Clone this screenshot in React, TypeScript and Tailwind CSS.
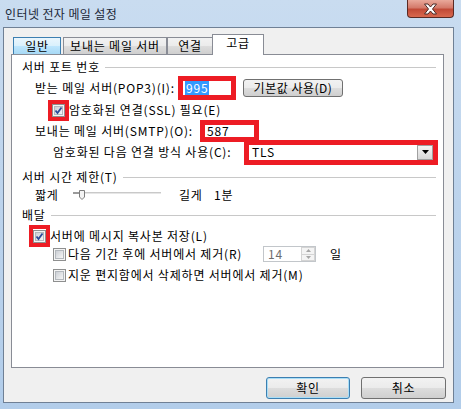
import type { ReactNode } from "react";

// Win7 style button face
const btnFace =
  "bg-[linear-gradient(to_bottom,#f2f2f2_0%,#ebebeb_50%,#dddddd_50%,#cfcfcf_100%)]";

function Mark({ className, children }: { className: string; children?: ReactNode }) {
  return (
    <div className={"flex shrink-0 border-[#ed1c24] bg-white " + className}>
      {children}
    </div>
  );
}

function Check({ checked = false }: { checked?: boolean }) {
  return (
    <span className="flex h-[13px] w-[13px] shrink-0 items-center justify-center border border-[#8e8f8f] bg-[#f4f4f4]">
      <span className="relative flex h-[9px] w-[9px] items-center justify-center border border-[#b3b8bd] bg-[linear-gradient(135deg,#cbcfd5,#f6f6f6)]">
        {checked && (
          <svg width="9" height="9" viewBox="0 0 9 9" className="absolute -left-px -top-px">
            <path d="M1.5 4.5 L3.5 7 L7.5 1.5" fill="none" stroke="#2a4a9a" strokeWidth="1.8" />
          </svg>
        )}
      </span>
    </span>
  );
}

function Group({ title, className = "" }: { title: string; className?: string }) {
  return (
    <div className={"flex h-[20px] shrink-0 items-center pl-[10px] pr-[7px] " + className}>
      <span>{title}</span>
      <div className="ml-[5px] h-px flex-1 bg-[#c8c8c8]" />
    </div>
  );
}

function Tab({ label, w, state }: { label: string; w: string; state: "normal" | "hover" | "active" }) {
  if (state === "active") {
    return (
      <div
        className={`relative z-10 -mb-px -ml-px flex h-[21px] items-center justify-center border border-b-0 border-[#898c95] bg-white pb-[5px] ${w}`}
      >
        {label}
      </div>
    );
  }
  const face =
    state === "hover"
      ? "border-[#3c7fb1] bg-[linear-gradient(to_bottom,#eaf6fd_0%,#d9f0fc_50%,#bee6fd_50%,#a7d9f5_100%)]"
      : "border-[#898c95] " + btnFace;
  return (
    <div className={`flex h-[17px] items-center justify-center border border-b-0 ${face} ${w}`}>
      {label}
    </div>
  );
}

export default function App() {
  return (
    <div className="flex h-[409px] w-[461px] flex-col overflow-hidden bg-[linear-gradient(to_bottom,#c9dcf0_0%,#bcd3ec_50%,#b2cdea_100%)] pl-[3px] pr-[7px] font-['Noto_Sans_CJK_KR',sans-serif] text-[12px] leading-none text-black">
      {/* Title bar */}
      <div className="flex h-[27px] shrink-0 items-start justify-between">
        <span className="mt-[8px] pl-[2px] tracking-[0.4px] text-[#1b2737]">인터넷 전자 메일 설정</span>
        <div className="flex h-[18px] w-[47px] items-center justify-center rounded-b-[4px] border border-t-0 border-[#5a2a24] bg-[linear-gradient(to_bottom,#e9a99b_0%,#d47a6a_45%,#c14a37_55%,#d9694f_100%)]">
          <svg width="15" height="12" viewBox="0 0 15 12">
            <path
              d="M1.5 1 H5 L7.5 4 L10 1 H13.5 L9.5 6 L13.5 11 H10 L7.5 8 L5 11 H1.5 L5.5 6 Z"
              fill="#ffffff"
              stroke="#4b2a26"
              strokeWidth="1"
              strokeLinejoin="round"
            />
          </svg>
        </div>
      </div>

      {/* Client area */}
      <div className="flex h-[376px] w-[451px] shrink-0 flex-col border border-[#6f8095] bg-[#f0f0f0] tracking-[0.8px]">
        {/* Tabs */}
        <div className="flex h-[26px] shrink-0 items-end pl-[9px]">
          <Tab label="일반" w="w-[48px]" state="hover" />
          <div className="w-px" />
          <Tab label="보내는 메일 서버" w="w-[104px] ml-px" state="normal" />
          <Tab label="연결" w="w-[46px]" state="normal" />
          <Tab label="고급" w="w-[52px]" state="active" />
        </div>

        {/* Tab panel */}
        <div className="ml-[7px] flex h-[314px] w-[433px] shrink-0 flex-col border border-[#898c95] bg-white pt-[2px]">
          <Group title="서버 포트 번호" />

          <div className="flex h-[22px] shrink-0 items-center pl-[23px]">
            <span className="w-[143px] shrink-0">받는 메일 서버(POP3)(I):</span>
            <Mark className="h-[24px] w-[58px] items-center border-[5px] pl-[2px]">
              <span className="bg-[#3399ff] px-[1px] py-[1px] text-white">995</span>
            </Mark>
            <button
              className={`ml-[7px] flex h-[18px] w-[100px] items-center justify-center rounded-[3px] border border-[#707070] tracking-[0.5px] ${btnFace}`}
            >
              기본값 사용(D)
            </button>
          </div>

          <div className="flex h-[22px] shrink-0 items-center pl-[36px]">
            <Mark className="items-center justify-center border-[4px]">
              <Check checked />
            </Mark>
            <span>암호화된 연결(SSL) 필요(E)</span>
          </div>

          <div className="flex h-[19px] shrink-0 items-center pl-[23px]">
            <span className="w-[165px] shrink-0">보내는 메일 서버(SMTP)(O):</span>
            <Mark className="h-[22px] w-[59px] items-center border-[5px] pl-[2px]">
              <span>587</span>
            </Mark>
          </div>

          <div className="flex h-[24px] shrink-0 items-center pl-[41px]">
            <span className="w-[191px] shrink-0">암호화된 다음 연결 방식 사용(C):</span>
            <Mark className="h-[25px] w-[194px] items-center border-[5px] pl-[3px]">
              <span className="flex-1">TLS</span>
              <span className="flex h-[15px] w-[16px] items-center justify-center border border-[#a0a0a0] bg-[linear-gradient(to_bottom,#f4f4f4,#d8d8d8)]">
                <svg width="7" height="4" viewBox="0 0 7 4">
                  <path d="M0 0 H7 L3.5 4 Z" fill="#000" />
                </svg>
              </span>
            </Mark>
          </div>

          <Group title="서버 시간 제한(T)" className="mt-[3px]" />

          <div className="flex h-[16px] shrink-0 items-center pl-[23px]">
            <span className="w-[38px] shrink-0">짧게</span>
            <svg width="88" height="12" viewBox="0 0 88 12" className="shrink-0">
              <rect x="0" y="3" width="88" height="2" fill="#e6e6e6" />
              <rect x="0" y="3" width="88" height="1" fill="#c9c9c9" />
              <rect x="0" y="3" width="6" height="2" fill="#9a9a9a" />
              <path d="M6.5 1.5 H11.5 V8 L9 10.5 L6.5 8 Z" fill="#f4f4f4" stroke="#7d7d7d" strokeWidth="1" />
            </svg>
            <span className="ml-[18px] w-[35px] shrink-0">길게</span>
            <span>1분</span>
          </div>

          <Group title="배달" className="h-[24px]" />

          <div className="flex h-[18px] shrink-0 items-center pl-[17px]">
            <Mark className="h-[22px] items-center justify-center border-[4px]">
              <Check checked />
            </Mark>
            <span>서버에 메시지 복사본 저장(L)</span>
          </div>

          <div className="flex h-[18px] shrink-0 items-center pl-[41px]">
            <Check />
            <span className="ml-[2px] w-[195px] shrink-0">다음 기간 후에 서버에서 제거(R)</span>
            <div className="flex h-[16px] w-[53px] shrink-0 items-stretch border border-[#c2c6ca] bg-white">
              <span className="flex flex-1 items-center pl-[4px] text-[#6d6d6d]">14</span>
              <span className="flex w-[14px] flex-col">
                <span className="flex flex-1 items-center justify-center border border-[#d4d4d4] bg-[#f4f4f4]">
                  <svg width="5" height="3" viewBox="0 0 5 3">
                    <path d="M0 3 L2.5 0 L5 3 Z" fill="#a6a6a6" />
                  </svg>
                </span>
                <span className="flex flex-1 items-center justify-center border border-t-0 border-[#d4d4d4] bg-[#f4f4f4]">
                  <svg width="5" height="3" viewBox="0 0 5 3">
                    <path d="M0 0 H5 L2.5 3 Z" fill="#a6a6a6" />
                  </svg>
                </span>
              </span>
            </div>
            <span className="ml-[14px]">일</span>
          </div>

          <div className="flex h-[24px] shrink-0 items-center pl-[41px]">
            <Check />
            <span className="ml-[2px]">지운 편지함에서 삭제하면 서버에서 제거(M)</span>
          </div>
        </div>

        {/* Dialog buttons */}
        <div className="mt-[9px] flex shrink-0 justify-end gap-[11px] pr-[7px]">
          <button
            className={`flex h-[22px] w-[84px] items-center justify-center rounded-[3px] border border-[#3c7fb1] shadow-[inset_0_0_0_1px_#a9def7] ${btnFace}`}
          >
            확인
          </button>
          <button
            className={`flex h-[22px] w-[85px] items-center justify-center rounded-[3px] border border-[#707070] ${btnFace}`}
          >
            취소
          </button>
        </div>
      </div>
    </div>
  );
}
